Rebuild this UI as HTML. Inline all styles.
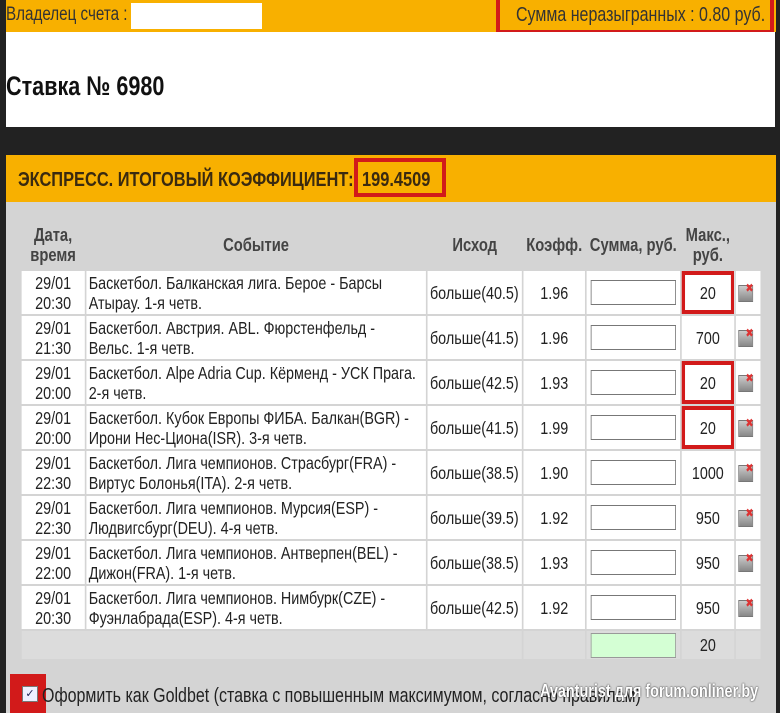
<!DOCTYPE html>
<html><head><meta charset="utf-8"><style>
body{margin:0;width:780px;height:713px;background:#222;overflow:hidden;font-family:"Liberation Sans",sans-serif;color:#222;position:relative}
.a{position:absolute;white-space:nowrap}
.n{transform:scaleX(.8);transform-origin:0 0}
.top{left:6px;top:0;width:770px;height:32px;background:#f8b000}
.white{left:6px;top:32px;width:769px;height:95px;background:#fff}
.hdr{left:6px;top:155px;width:770px;height:47px;background:#f8b000}
.panel{left:6px;top:202px;width:770px;height:511px;background:#d4d4d4}
.tw{position:absolute;left:20px;top:219px;transform:scaleX(.82);transform-origin:0 0}
table{border-collapse:separate;border-spacing:2px;font-size:17.5px;table-layout:fixed;width:905px}
td{background:#fff;height:43px;padding:0 3px;line-height:20px;white-space:nowrap;overflow:hidden}
tr.s td{height:28px;background:#dcdcdc}
th{font-weight:bold;color:#444;font-size:18px;height:46px;line-height:20px;text-align:center;white-space:nowrap}
.c{text-align:center}
.inp{display:inline-block;width:102px;height:23px;border:1px solid #777;background:#fff;vertical-align:middle}
.red{box-shadow:inset 0 0 0 4px #d21a1a}
.del{display:inline-block;width:16px;height:15px;background:linear-gradient(#ccc,#888);border:1px solid #777;position:relative;top:3px}
.del:after{content:"✖";position:absolute;left:8px;top:-8px;color:#d33;font-size:12px}
.box{border:4px solid #d21a1a;position:absolute}
</style></head><body>
<div class="a top"></div>
<div class="a n" style="left:6px;top:4px;font-size:19px;color:#333">Владелец счета :</div>
<div class="a" style="left:131px;top:3px;width:131px;height:26px;background:#fff"></div>
<div class="box" style="left:496px;top:-4px;width:270px;height:30px"></div>
<div class="a n" style="left:516px;top:4px;font-size:20px;color:#333">Сумма неразыгранных : 0.80 руб.</div>
<div class="a white"></div>
<div class="a n" style="left:6px;top:71px;font-size:27px;font-weight:bold;color:#111">Ставка № 6980</div>
<div class="a hdr"></div>
<div class="a n" style="left:18px;top:168px;font-size:20.5px;font-weight:bold;color:#3a2a10">ЭКСПРЕСС. ИТОГОВЫЙ КОЭФФИЦИЕНТ:</div>
<div class="box" style="left:354px;top:158px;width:84px;height:31px"></div>
<div class="a n" style="left:362px;top:168px;font-size:20.5px;font-weight:bold;color:#3a2a10">199.4509</div>
<div class="a panel"></div>
<div class="tw">
<table>
<colgroup><col style="width:76px"><col style="width:410px"><col style="width:114px"><col style="width:74px"><col style="width:113px"><col style="width:63px"><col style="width:30px"></colgroup>
<tr><th>Дата,<br>время</th><th>Событие</th><th>Исход</th><th>Коэфф.</th><th>Сумма, руб.</th><th>Макс.,<br>руб.</th><th></th></tr>
<tr><td class="c">29/01<br>20:30</td><td>Баскетбол. Балканская лига. Берое - Барсы<br>Атырау. 1-я четв.</td><td>больше(40.5)</td><td class="c">1.96</td><td class="c"><span class="inp"></span></td><td class="c red">20</td><td><span class="del"></span></td></tr>
<tr><td class="c">29/01<br>21:30</td><td>Баскетбол. Австрия. ABL. Фюрстенфельд -<br>Вельс. 1-я четв.</td><td>больше(41.5)</td><td class="c">1.96</td><td class="c"><span class="inp"></span></td><td class="c">700</td><td><span class="del"></span></td></tr>
<tr><td class="c">29/01<br>20:00</td><td>Баскетбол. Alpe Adria Cup. Кёрменд - УСК Прага.<br>2-я четв.</td><td>больше(42.5)</td><td class="c">1.93</td><td class="c"><span class="inp"></span></td><td class="c red">20</td><td><span class="del"></span></td></tr>
<tr><td class="c">29/01<br>20:00</td><td>Баскетбол. Кубок Европы ФИБА. Балкан(BGR) -<br>Ирони Нес-Циона(ISR). 3-я четв.</td><td>больше(41.5)</td><td class="c">1.99</td><td class="c"><span class="inp"></span></td><td class="c red">20</td><td><span class="del"></span></td></tr>
<tr><td class="c">29/01<br>22:30</td><td>Баскетбол. Лига чемпионов. Страсбург(FRA) -<br>Виртус Болонья(ITA). 2-я четв.</td><td>больше(38.5)</td><td class="c">1.90</td><td class="c"><span class="inp"></span></td><td class="c">1000</td><td><span class="del"></span></td></tr>
<tr><td class="c">29/01<br>22:30</td><td>Баскетбол. Лига чемпионов. Мурсия(ESP) -<br>Людвигсбург(DEU). 4-я четв.</td><td>больше(39.5)</td><td class="c">1.92</td><td class="c"><span class="inp"></span></td><td class="c">950</td><td><span class="del"></span></td></tr>
<tr><td class="c">29/01<br>22:00</td><td>Баскетбол. Лига чемпионов. Антверпен(BEL) -<br>Дижон(FRA). 1-я четв.</td><td>больше(38.5)</td><td class="c">1.93</td><td class="c"><span class="inp"></span></td><td class="c">950</td><td><span class="del"></span></td></tr>
<tr><td class="c">29/01<br>20:30</td><td>Баскетбол. Лига чемпионов. Нимбурк(CZE) -<br>Фуэнлабрада(ESP). 4-я четв.</td><td>больше(42.5)</td><td class="c">1.92</td><td class="c"><span class="inp"></span></td><td class="c">950</td><td><span class="del"></span></td></tr>
<tr class="s"><td colspan="3"></td><td></td><td class="c"><span class="inp" style="background:#d4ffd4;border-color:#999"></span></td><td class="c">20</td><td></td></tr>
</table>
</div>
<div class="a" style="left:10px;top:674px;width:36px;height:39px;background:#d21a1a"></div>
<div class="a" style="left:22px;top:686px;width:14px;height:14px;background:#eef;border:1px solid #777;font-size:11px;line-height:14px;text-align:center;color:#225">✓</div>
<div class="a n" style="left:42px;top:685px;font-size:20px;color:#222">Оформить как Goldbet (ставка с повышенным максимумом, согласно правилам)</div>
<div class="a n" style="left:540px;top:681px;font-size:18px;font-weight:bold;color:#fff;text-shadow:0 0 2px #000">Avanturist для forum.onliner.by</div>
</body></html>
